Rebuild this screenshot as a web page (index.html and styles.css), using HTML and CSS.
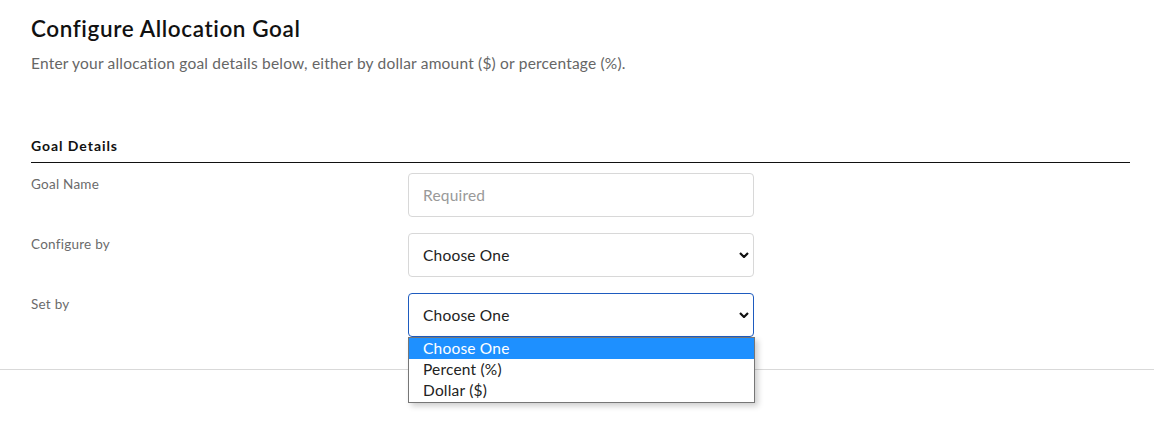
FILE: index.html
```html
<!DOCTYPE html>
<html lang="en">
<head>
<meta charset="utf-8">
<title>Configure Allocation Goal</title>
<link rel="stylesheet" href="styles.css">
</head>
<body>
<main class="page">
  <header class="intro">
    <h1 class="title">Configure Allocation Goal</h1>
    <p class="subtitle">Enter your allocation goal details below, either by dollar amount ($) or percentage (%).</p>
  </header>
  <section class="goal">
    <h2 class="section-title">Goal Details</h2>
    <div class="form">
      <div class="row">
        <label class="label" for="goal-name">Goal Name</label>
        <input class="field" id="goal-name" type="text" placeholder="Required">
      </div>
      <div class="row">
        <label class="label" for="configure-by">Configure by</label>
        <div class="select-wrap">
          <select class="field select" id="configure-by">
            <option>Choose One</option>
          </select>
          <svg class="chevron" viewBox="0 0 10 6" width="10" height="6"><polyline points="1,1 5,5 9,1" fill="none" stroke="#111" stroke-width="2.2"/></svg>
        </div>
      </div>
      <div class="row">
        <label class="label" for="set-by">Set by</label>
        <div class="select-wrap">
          <select class="field select focused" id="set-by">
            <option>Choose One</option>
            <option>Percent (%)</option>
            <option>Dollar ($)</option>
          </select>
          <svg class="chevron" viewBox="0 0 10 6" width="10" height="6"><polyline points="1,1 5,5 9,1" fill="none" stroke="#111" stroke-width="2.2"/></svg>
          <ul class="listbox">
            <li class="option active">Choose One</li>
            <li class="option">Percent (%)</li>
            <li class="option">Dollar ($)</li>
          </ul>
        </div>
      </div>
    </div>
  </section>
</main>
<div class="footer-rule"></div>
</body>
</html>
```

FILE: styles.css
```css
* { box-sizing: border-box; }

html {
  height: 100%;
  background: #fff;
}

body {
  margin: 0;
  padding: 0;
  min-height: 100%;
  font-family: Lato, "Liberation Sans", sans-serif;
  color: #1a1a1a;
}

.page {
  padding: 0 24px 0 31px;
}

.title {
  margin: 15px 0 0;
  font-size: 22.5px;
  line-height: 28px;
  font-weight: 600;
  letter-spacing: 0.6px;
  color: #111;
}

.subtitle {
  margin: 10px 0 0;
  font-size: 15.5px;
  line-height: 20px;
  letter-spacing: 0.2px;
  color: #666;
}

.goal {
  margin-top: 63px;
  padding-bottom: 32px;
}

.section-title {
  margin: 0;
  padding-bottom: 6px;
  font-size: 14px;
  line-height: 20px;
  font-weight: 700;
  letter-spacing: 0.95px;
  color: #111;
  border-bottom: 1px solid #111;
}

.form {
  padding-top: 10px;
  display: flex;
  flex-direction: column;
  gap: 16px;
}

.row {
  display: grid;
  grid-template-columns: 377px 346px;
  align-items: start;
}

.label {
  padding-top: 2px;
  font-size: 13.5px;
  line-height: 18px;
  letter-spacing: 0.25px;
  color: #6b6b6b;
}

.field {
  display: block;
  width: 346px;
  height: 44px;
  margin: 0;
  padding: 0 14px;
  border: 1px solid #d8d8d8;
  border-radius: 4px;
  background: #fff;
  font-family: inherit;
  font-size: 15.5px;
  letter-spacing: 0.2px;
  color: #222;
  outline: none;
}

.field::placeholder {
  color: #999;
}

.select-wrap {
  position: relative;
  width: 346px;
}

.select {
  -webkit-appearance: none;
  appearance: none;
  padding-top: 0;
  padding-bottom: 1px;
}

.select.focused {
  border-color: #1e5bbf;
}

.chevron {
  position: absolute;
  right: 5px;
  top: 19px;
  pointer-events: none;
}

.listbox {
  position: absolute;
  left: 0;
  top: 44px;
  width: 347px;
  margin: 0;
  padding: 0 0 1px;
  list-style: none;
  background: #fff;
  border: 1px solid #767676;
  box-shadow: 3px 3px 6px rgba(0, 0, 0, 0.2);
  z-index: 2;
}

.option {
  height: 21px;
  padding: 0 14px;
  font-size: 15.5px;
  line-height: 20px;
  letter-spacing: 0.2px;
  color: #222;
}

.option.active {
  background: #1e90ff;
  color: #fff;
}

.footer-rule {
  border-top: 1px solid #d9d9d9;
}
```
